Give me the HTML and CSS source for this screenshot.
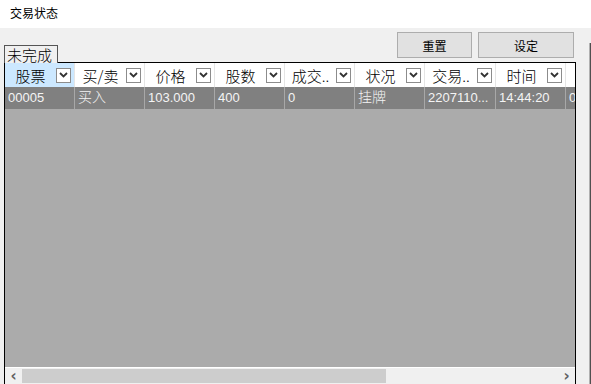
FILE: index.html
```html
<!DOCTYPE html>
<html lang="zh-CN">
<head>
    <meta charset="UTF-8">
    <title>交易状态</title>
    <link rel="stylesheet" href="styles.css">
</head>
<body>
    <div class="titlebar">交易状态</div>

    <div class="panel">
        <div class="content">
            <div class="toolbar">
                <div class="tab">未完成</div>
                <div class="buttons">
                    <button class="btn btn-reset">重置</button>
                    <button class="btn btn-set">设定</button>
                </div>
            </div>

            <div class="grid-frame">
                <div class="grid">
                    <div class="row head-row">
                        <div class="cell col-a selected"><span class="label">股票</span><span class="drop"><svg width="9" height="6" viewBox="0 0 9 6"><polyline points="1,1 4.5,4.5 8,1" fill="none" stroke="#333" stroke-width="1.8"/></svg></span></div>
                        <div class="cell col-b"><span class="label">买/卖</span><span class="drop"><svg width="9" height="6" viewBox="0 0 9 6"><polyline points="1,1 4.5,4.5 8,1" fill="none" stroke="#333" stroke-width="1.8"/></svg></span></div>
                        <div class="cell col-c"><span class="label">价格</span><span class="drop"><svg width="9" height="6" viewBox="0 0 9 6"><polyline points="1,1 4.5,4.5 8,1" fill="none" stroke="#333" stroke-width="1.8"/></svg></span></div>
                        <div class="cell col-d"><span class="label">股数</span><span class="drop"><svg width="9" height="6" viewBox="0 0 9 6"><polyline points="1,1 4.5,4.5 8,1" fill="none" stroke="#333" stroke-width="1.8"/></svg></span></div>
                        <div class="cell col-e"><span class="label">成交..</span><span class="drop"><svg width="9" height="6" viewBox="0 0 9 6"><polyline points="1,1 4.5,4.5 8,1" fill="none" stroke="#333" stroke-width="1.8"/></svg></span></div>
                        <div class="cell col-f"><span class="label">状况</span><span class="drop"><svg width="9" height="6" viewBox="0 0 9 6"><polyline points="1,1 4.5,4.5 8,1" fill="none" stroke="#333" stroke-width="1.8"/></svg></span></div>
                        <div class="cell col-g"><span class="label">交易..</span><span class="drop"><svg width="9" height="6" viewBox="0 0 9 6"><polyline points="1,1 4.5,4.5 8,1" fill="none" stroke="#333" stroke-width="1.8"/></svg></span></div>
                        <div class="cell col-h"><span class="label">时间</span><span class="drop"><svg width="9" height="6" viewBox="0 0 9 6"><polyline points="1,1 4.5,4.5 8,1" fill="none" stroke="#333" stroke-width="1.8"/></svg></span></div>
                        <div class="cell col-i"></div>
                    </div>

                    <div class="row data-row">
                        <div class="cell col-a">00005</div>
                        <div class="cell col-b cjk">买入</div>
                        <div class="cell col-c">103.000</div>
                        <div class="cell col-d">400</div>
                        <div class="cell col-e">0</div>
                        <div class="cell col-f cjk">挂牌</div>
                        <div class="cell col-g">2207110...</div>
                        <div class="cell col-h">14:44:20</div>
                        <div class="cell col-i">0</div>
                    </div>

                    <div class="grid-empty"></div>
                </div>

                <div class="hscroll">
                    <span class="arrow">&#8249;</span>
                    <div class="track"><div class="thumb"></div></div>
                    <span class="arrow">&#8250;</span>
                </div>
            </div>
        </div>
        <div class="edge"></div>
    </div>
</body>
</html>
```

FILE: styles.css
```css
* {
    margin: 0;
    padding: 0;
    box-sizing: border-box;
}

body {
    width: 591px;
    height: 384px;
    overflow: hidden;
    font-family: "Noto Sans CJK SC", "Liberation Sans", sans-serif;
    font-size: 12px;
    color: #000;
    background: #f0f0f0;
}

.titlebar {
    height: 28px;
    background: #ffffff;
    padding: 5px 0 0 10px;
    font-size: 12px;
    line-height: 16px;
}

.panel {
    display: flex;
    height: 356px;
    background: #f0f0f0;
}

.content {
    width: 577px;
    padding-left: 4px;
    display: flex;
    flex-direction: column;
}

.edge {
    width: 2px;
    margin-left: 12px;
    margin-top: 15px;
    background: #505050;
    border-left: 1px solid #b0b0b0;
}

/* tab + buttons */
.toolbar {
    height: 34px;
    display: flex;
    justify-content: space-between;
    align-items: flex-end;
}

.tab {
    width: 54px;
    height: 18px;
    margin-bottom: -1px;
    border: 1px solid #555;
    border-bottom: none;
    background: #f0f0f0;
    font-size: 15px;
    font-weight: 300;
    line-height: 17px;
    padding-left: 2px;
    position: relative;
    z-index: 1;
}

.buttons {
    display: flex;
    gap: 6px;
    align-self: flex-start;
    margin-top: 4px;
    margin-right: 3px;
}

.btn {
    height: 26px;
    background: #e1e1e1;
    border: 1px solid #adadad;
    font-family: "Noto Sans CJK SC", sans-serif;
    font-size: 12px;
    color: #000;
}

.btn-reset {
    width: 75px;
}

.btn-set {
    width: 96px;
}

/* grid */
.grid-frame {
    flex: 1;
    width: 572px;
    border: 1px solid #000;
    border-bottom: none;
    display: flex;
    flex-direction: column;
}

.grid {
    flex: 1;
    display: flex;
    flex-direction: column;
    background: #ababab;
    overflow: hidden;
}

.row {
    display: flex;
    white-space: nowrap;
}

.cell {
    flex: none;
    overflow: hidden;
}

.col-a, .col-b, .col-c, .col-d, .col-e, .col-f, .col-h { width: 70px; }
.col-g { width: 71px; }
.col-i { width: 20px; }

.head-row {
    height: 24px;
    background: #ffffff;
}

.head-row .cell {
    display: flex;
    align-items: center;
    height: 24px;
    border-right: 1px solid #e5e5e5;
    font-size: 15px;
    font-weight: 300;
}

.head-row .cell.selected {
    background: #cce8ff;
}

.head-row .label {
    flex: 1;
    text-align: center;
    overflow: hidden;
}

.drop {
    width: 15px;
    height: 15px;
    margin-right: 3px;
    border: 1px solid #8c8c8c;
    background: #fff;
    display: flex;
    align-items: center;
    justify-content: center;
}

.data-row {
    height: 22px;
    background: #808080;
    color: #f4f4f4;
}

.data-row .cell {
    height: 22px;
    display: flex;
    align-items: center;
    padding-left: 3px;
    border-right: 1px solid #a8a8a8;
    font-family: "Liberation Sans", sans-serif;
    font-size: 13px;
    line-height: 16px;
}

.data-row .cell.cjk {
    font-family: "Noto Sans CJK SC", sans-serif;
    font-size: 14px;
    font-weight: 300;
    line-height: 16px;
    padding-bottom: 4px;
}

.grid-empty {
    flex: 1;
}

/* horizontal scrollbar */
.hscroll {
    height: 17px;
    border-top: 1px solid #ffffff;
    background: #f0f0f0;
    display: flex;
    align-items: center;
}

.arrow {
    width: 17px;
    text-align: center;
    font-family: "DejaVu Sans", sans-serif;
    font-size: 15px;
    font-weight: bold;
    color: #606060;
    line-height: 16px;
}

.track {
    flex: 1;
    height: 16px;
    display: flex;
    align-items: center;
}

.thumb {
    width: 364px;
    height: 14px;
    background: #cdcdcd;
}
```
